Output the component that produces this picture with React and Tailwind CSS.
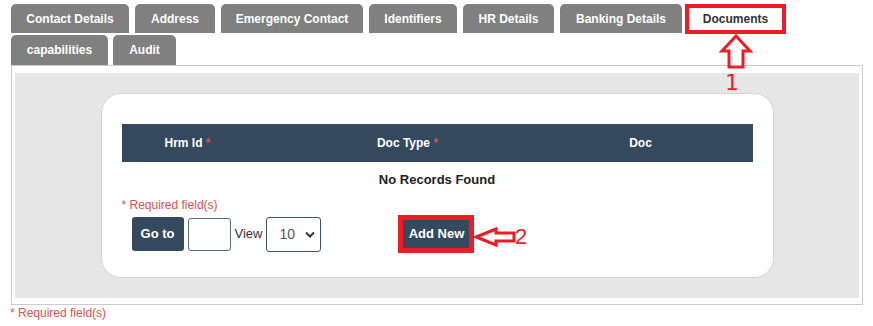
import React from "react";

const tabs1 = [
  { label: "Contact Details", w: "w-[118px]" },
  { label: "Address", w: "w-[80px]" },
  { label: "Emergency Contact", w: "w-[142px]" },
  { label: "Identifiers", w: "w-[88px]" },
  { label: "HR Details", w: "w-[91px]" },
  { label: "Banking Details", w: "w-[122px]" },
];

function Tab({ label, w, h = "h-[29px]" }) {
  return (
    <div
      className={`${w} ${h} flex items-center justify-center rounded-t-[5px] bg-[#808080] text-[12px] font-bold text-white`}
    >
      {label}
    </div>
  );
}

export default function App() {
  return (
    <div
      className="relative h-[326px] w-[873px] overflow-hidden bg-white text-[#333]"
      style={{ fontFamily: '"Liberation Sans", Arial, sans-serif' }}
    >
      {/* Tabs */}
      <div className="pl-[11px] pt-[4px]">
        <div className="flex gap-[6px]">
          {tabs1.map((t) => (
            <Tab key={t.label} {...t} />
          ))}
          <div className="-ml-[3px] flex h-[30px] w-[101px] items-center justify-center border-[4px] border-[#ed1c24] bg-white text-[12px] font-bold text-[#333]">
            Documents
          </div>
        </div>
        <div className="mt-[1px] flex gap-[5px]">
          <Tab label="capabilities" w="w-[97px]" h="h-[30px]" />
          <Tab label="Audit" w="w-[63px]" h="h-[30px]" />
        </div>
      </div>

      {/* Panel */}
      <div className="ml-[11px] w-[852px] border border-[#cccccc] pb-[6px] pl-[3px] pr-[3px] pt-[7px]">
        <div className="flex h-[225px] justify-center bg-[#e6e6e6] pt-[20px]">
          <div className="h-[185px] w-[673px] rounded-[20px] border border-[#d4d4d4] bg-white px-[20px] pt-[30px]">
            <div className="grid h-[38px] grid-cols-[132px_308px_158px_1fr] items-center bg-[#34495e] text-[12px] font-bold text-white">
              <div className="text-center">
                Hrm Id <span className="text-[#d9534f]">*</span>
              </div>
              <div className="text-center">
                Doc Type <span className="text-[#d9534f]">*</span>
              </div>
              <div className="text-center">Doc</div>
              <div />
            </div>
            <div className="flex h-[36px] items-center justify-center text-[13px] font-bold text-[#222]">
              No Records Found
            </div>
            <div className="text-[12px] leading-[14px] text-[#d9534f]">* Required field(s)</div>
            <div className="mt-[3px] flex items-center">
              <button className="ml-[10px] h-[34px] w-[52px] rounded-[3px] bg-[#34495e] text-[13px] font-bold text-white">
                Go to
              </button>
              <div className="ml-[4px] h-[33px] w-[43px] rounded-[3px] border border-[#5b6b7b] bg-white" />
              <span className="ml-[4px] text-[13px] text-[#333]">View</span>
              <div className="ml-[4px] flex h-[35px] w-[55px] items-center justify-between rounded-[3px] border border-[#3f5266] bg-white pl-[12px] pr-[5px] text-[14px] text-[#555]">
                <span>10</span>
                <svg width="10" height="7" viewBox="0 0 10 7">
                  <path d="M1 1.5 L5 5.5 L9 1.5" fill="none" stroke="#333" strokeWidth="2" />
                </svg>
              </div>
              <div className="ml-[77px] h-[38px] w-[76px] border-[5px] border-[#ed1c24]">
                <button className="h-full w-full bg-[#34495e] text-[13px] font-bold text-white">
                  Add New
                </button>
              </div>
            </div>
          </div>
        </div>
      </div>

      <div className="ml-[10px] mt-[1px] text-[12px] leading-[14px] text-[#d9534f]">* Required field(s)</div>

      {/* Annotations */}
      <svg className="absolute left-0 top-0" width="873" height="326" viewBox="0 0 873 326" style={{ pointerEvents: "none" }}>
        <polygon
          points="736,36 750,51 743,51 743,67 729,67 729,51 722,51"
          fill="white"
          stroke="#ed1c24"
          strokeWidth="3"
          strokeLinejoin="miter"
        />
        <polygon
          points="476,237 496,229 496,233 514,233 514,241 496,241 496,245"
          fill="white"
          stroke="#ed1c24"
          strokeWidth="3"
        />
      </svg>
      <div
        className="absolute left-[725px] top-[70px] text-[22px] leading-[26px] text-[#ed1c24]"
        style={{ fontFamily: '"DejaVu Sans", sans-serif' }}
      >
        1
      </div>
      <div
        className="absolute left-[515px] top-[224px] text-[22px] leading-[26px] text-[#ed1c24]"
        style={{ fontFamily: '"Liberation Sans", sans-serif' }}
      >
        2
      </div>
    </div>
  );
}
